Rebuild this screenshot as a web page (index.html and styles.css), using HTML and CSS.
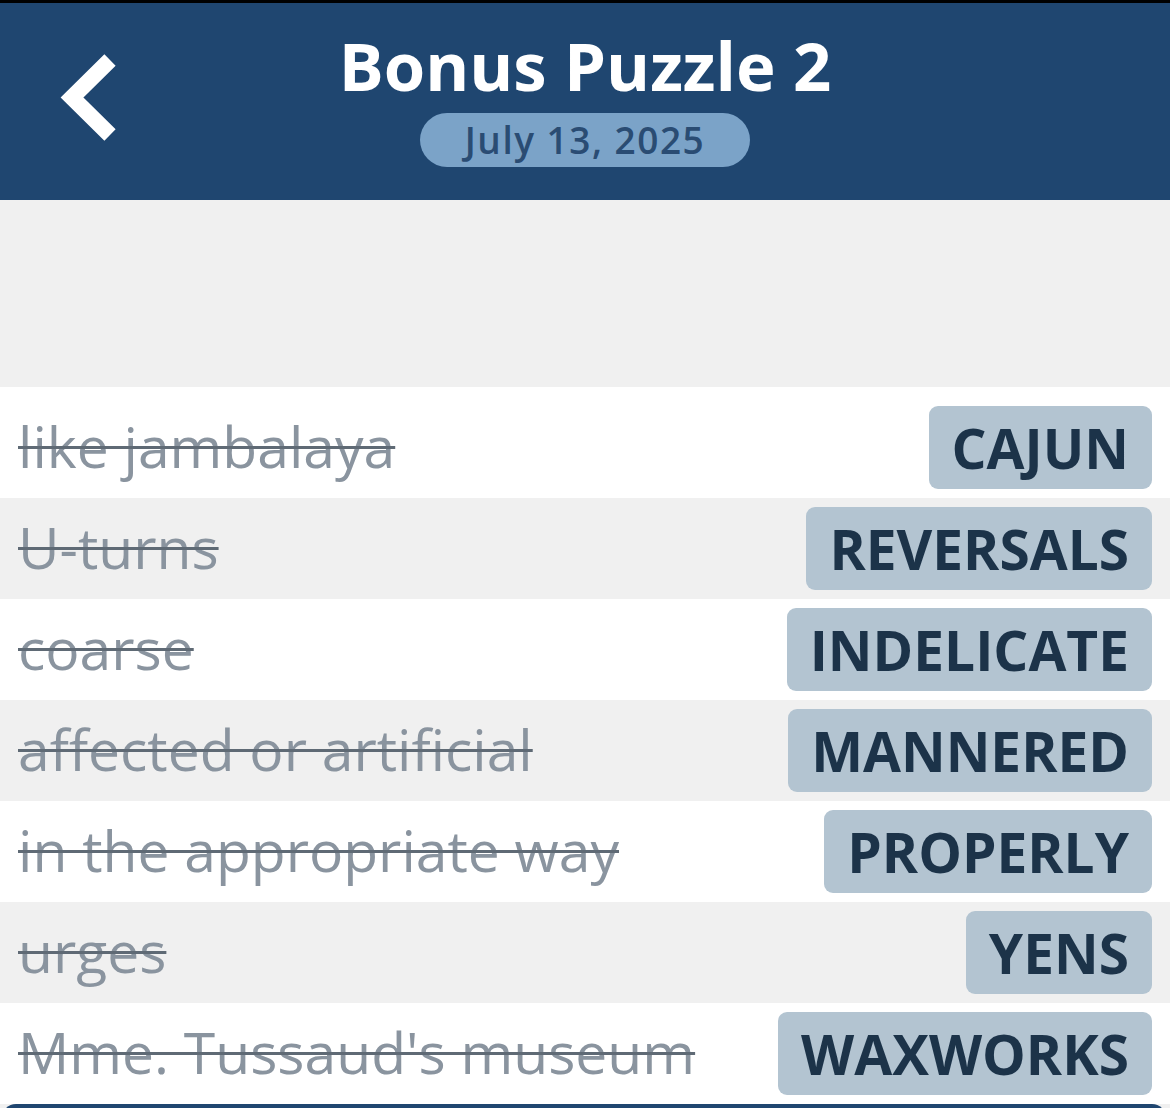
FILE: index.html
```html
<!DOCTYPE html>
<html lang="en">
<head>
    <meta charset="UTF-8">
    <meta name="viewport" content="width=device-width, initial-scale=1.0">
    <title>Bonus Puzzle 2</title>
    <link rel="stylesheet" href="styles.css">
</head>
<body>
    <div class="status"></div>
    <header class="topbar">
        <a class="back" href="#" aria-label="Back">
            <svg width="70" height="100" viewBox="0 0 70 100">
                <polyline points="60,12 22,49.5 60,87" fill="none" stroke="#fff" stroke-width="16" stroke-linejoin="miter"/>
            </svg>
        </a>
        <div class="heading">
            <h1>Bonus Puzzle 2</h1>
            <span class="date">July 13, 2025</span>
        </div>
        <div></div>
    </header>

    <div class="spacer"></div>

    <ul class="answers">
        <li class="row first"><span class="clue">like jambalaya</span><span class="word">CAJUN</span></li>
        <li class="row"><span class="clue">U-turns</span><span class="word">REVERSALS</span></li>
        <li class="row"><span class="clue">coarse</span><span class="word">INDELICATE</span></li>
        <li class="row"><span class="clue">affected or artificial</span><span class="word">MANNERED</span></li>
        <li class="row"><span class="clue">in the appropriate way</span><span class="word">PROPERLY</span></li>
        <li class="row"><span class="clue">urges</span><span class="word">YENS</span></li>
        <li class="row"><span class="clue">Mme. Tussaud's museum</span><span class="word">WAXWORKS</span></li>
    </ul>

    <div class="bottombar"></div>
</body>
</html>
```

FILE: styles.css
```css
body {
    font-family: "Open Sans", "Noto Sans", sans-serif;
    background-color: #f0f0f0;
    margin: 0;
    padding: 0;
    overflow: hidden;
}
.status {
    height: 3px;
    background: #000;
}
.topbar {
    height: 197px;
    background-color: #1f4670;
    display: grid;
    grid-template-columns: 1fr auto 1fr;
    align-items: start;
}
.back {
    display: flex;
    padding: 45px 0 0 50px;
}
.heading {
    display: flex;
    flex-direction: column;
    align-items: center;
}
h1 {
    margin: 20px 0 0;
    color: #fff;
    font-size: 67px;
    font-weight: 700;
    line-height: 84px;
}
.date {
    margin-top: 6px;
    width: 330px;
    height: 54px;
    line-height: 54px;
    text-align: center;
    border-radius: 27px;
    background-color: #7ba3c8;
    color: #2a4c73;
    font-size: 37px;
    font-weight: 600;
    letter-spacing: 1.5px;
}
.spacer {
    height: 187px;
}
.answers {
    list-style: none;
    margin: 0;
    padding: 0;
}
.row {
    height: 101px;
    display: flex;
    align-items: center;
    justify-content: space-between;
    padding: 0 18px;
    background-color: #f0f0f0;
}
.row:nth-child(odd) {
    background-color: #fff;
}
.row.first {
    padding-top: 10px;
}
.clue {
    color: #8a949f;
    font-size: 57px;
    line-height: 70px;
    margin-top: -4px;
    text-decoration: line-through;
    text-decoration-color: #5f6a75;
    text-decoration-thickness: 3px;
}
.word {
    height: 83px;
    line-height: 83px;
    padding: 0 23px;
    border-radius: 9px;
    background-color: #b3c4d1;
    color: #1c3349;
    font-size: 55px;
    font-weight: 700;
}
.bottombar {
    height: 20px;
    margin: 0 4px 0 2px;
    background: #1f4670;
    border-radius: 14px 14px 0 0;
}
```
